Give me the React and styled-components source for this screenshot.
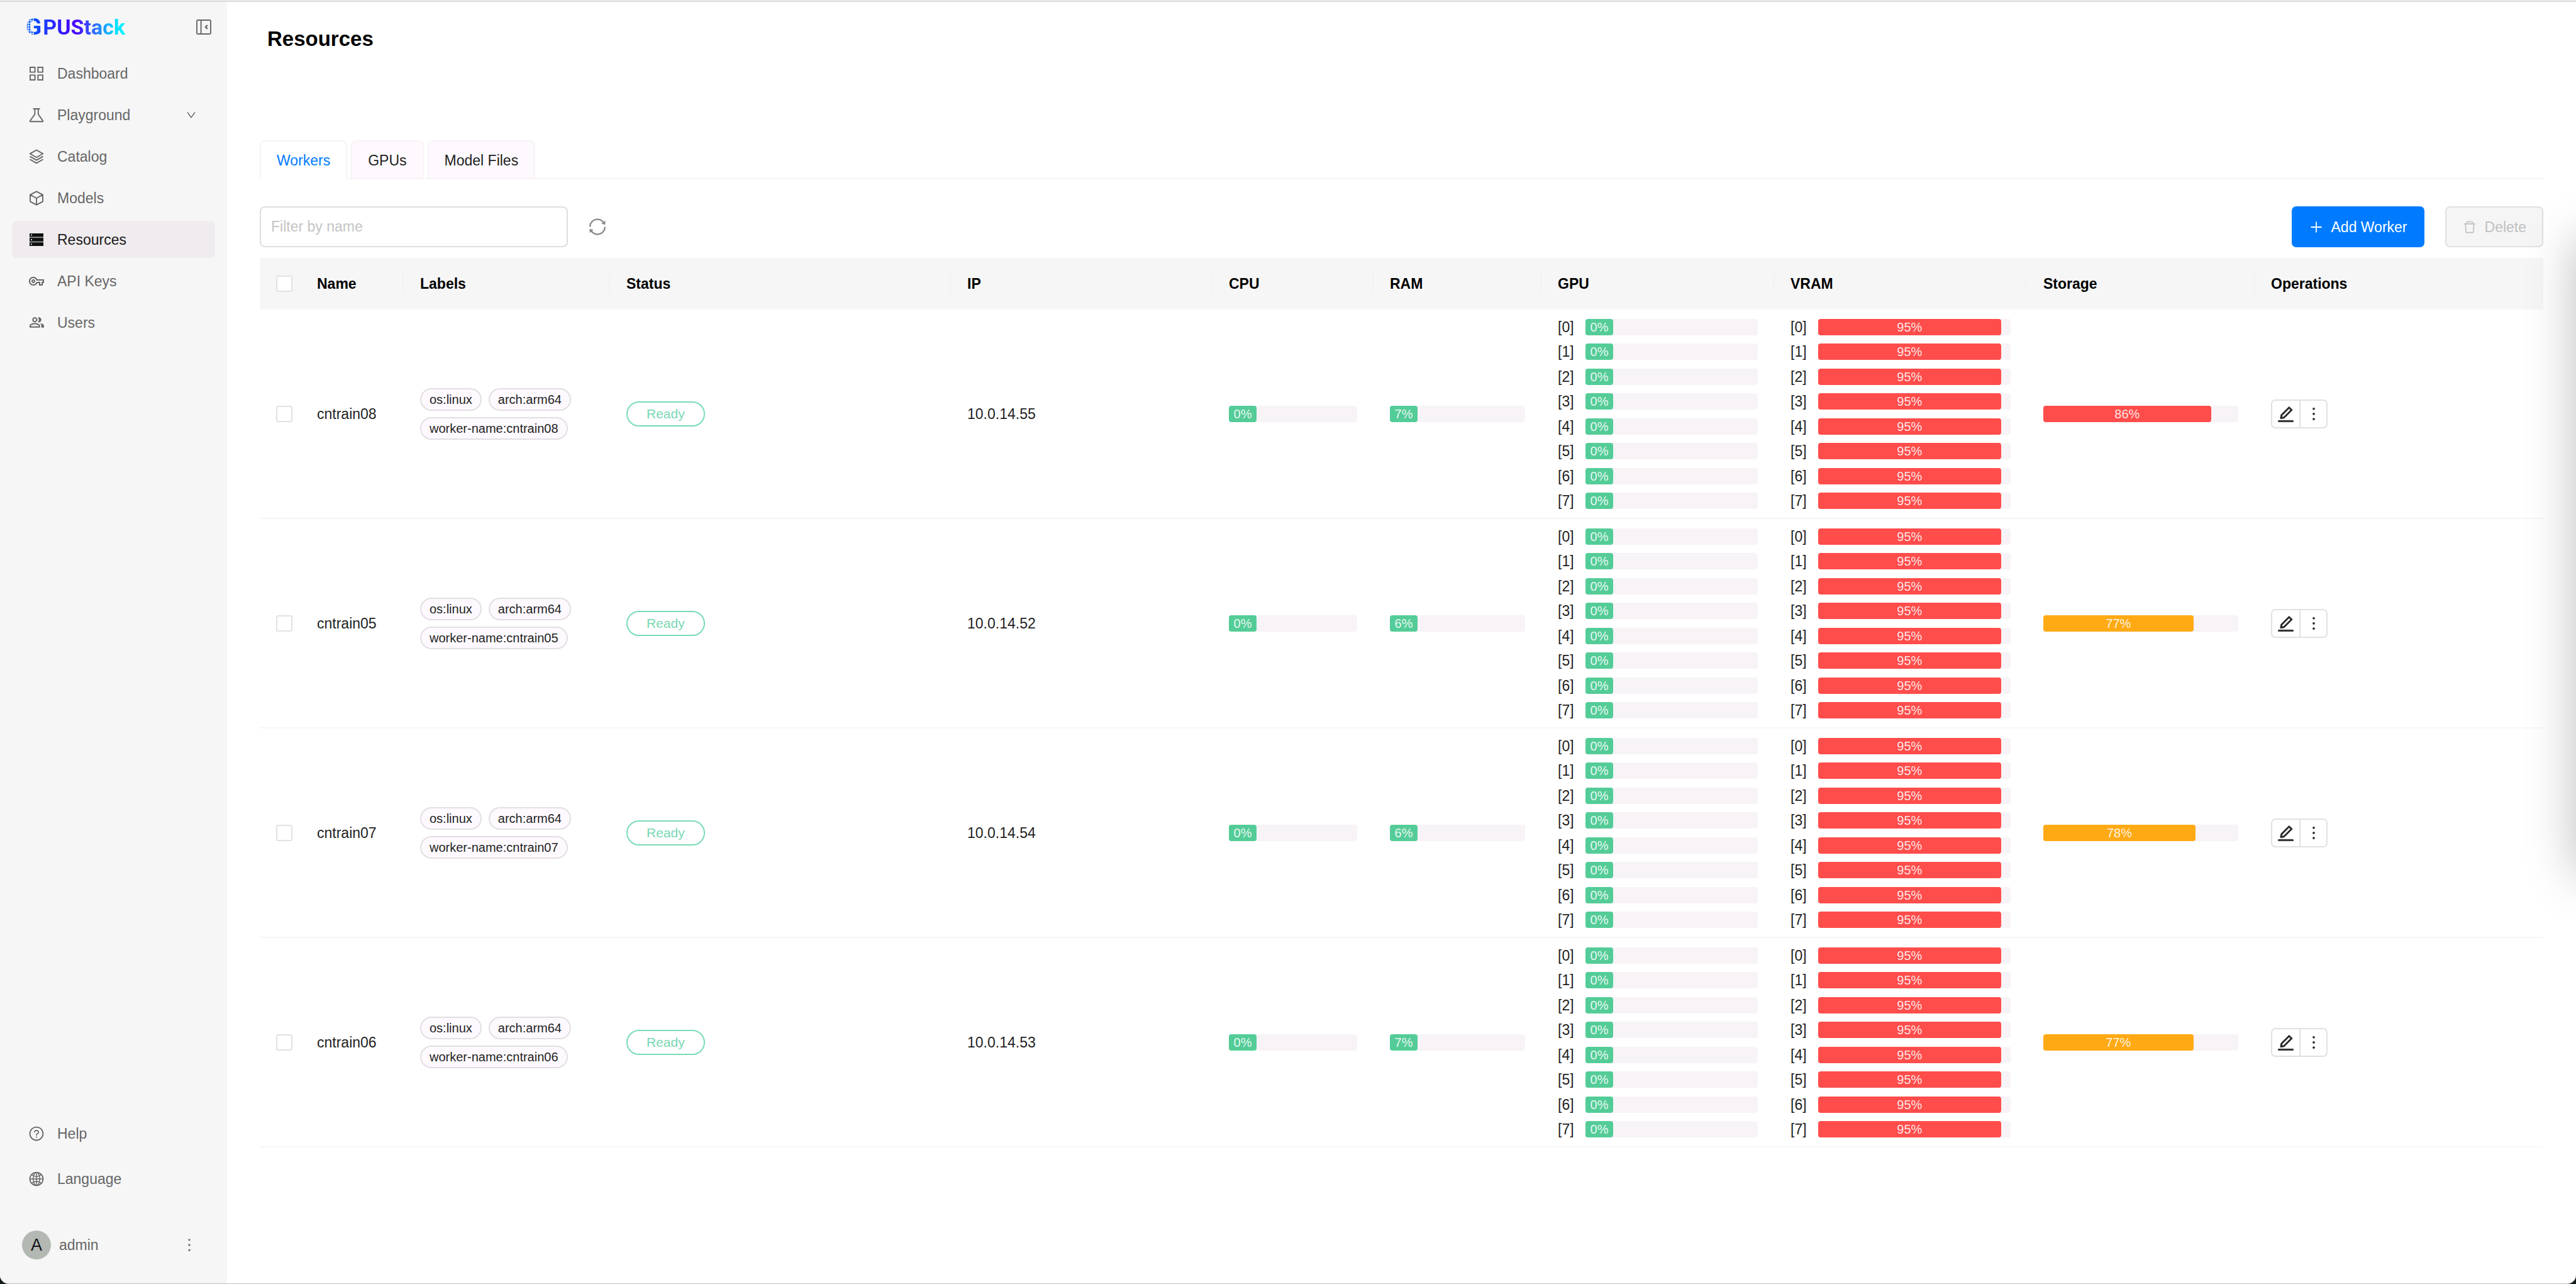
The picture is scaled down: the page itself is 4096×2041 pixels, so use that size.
import React from 'react';
import styled, { createGlobalStyle, css } from 'styled-components';
import {
  AiOutlineDelete,
  AiOutlineDown,
  AiOutlineEdit,
  AiOutlineGlobal,
  AiOutlineMore,
  AiOutlinePlus,
  AiOutlineQuestionCircle,
  AiOutlineSync,
} from 'react-icons/ai';
import { MdOutlinePeopleAlt, MdOutlineVpnKey } from 'react-icons/md';

const GlobalStyle = createGlobalStyle`
  *, *::before, *::after { box-sizing: border-box; }
  body {
    margin: 0;
    background: #141c16;
    color: #1f1f1f;
    font-family: "Liberation Sans", Arial, sans-serif;
    font-size: 23px;
    line-height: 36px;
  }
  button, input { font: inherit; color: inherit; }
  ul { list-style: none; margin: 0; padding: 0; }
`;

/* ---------- shell ---------- */

const Page = styled.div`
  display: flex;
  flex-direction: column;
  min-height: 100vh;
  overflow: hidden;
  background: #fff;
  border-bottom: 1px solid #bdbdbd;
  border-radius: 0 0 14px 14px;
`;

const TopEdge = styled.div`
  height: 3px;
  background: #f3f3f3;
  border-bottom: 2px solid #d9d9d9;
`;

const Body = styled.div`
  display: flex;
  flex: 1;
`;

const Sidebar = styled.aside`
  display: flex;
  flex-direction: column;
  flex: 0 0 361px;
  padding: 0 19px 32px;
  background: #f6f6f6;
`;

const Brand = styled.div`
  display: flex;
  align-items: center;
  justify-content: space-between;
  height: 80px;
  margin-bottom: 4px;
  padding: 0 2px 0 22px;
`;

const Logo = styled.a`
  position: relative;
  font-family: Roboto, sans-serif;
  font-weight: 700;
  font-size: 34px;
  line-height: 40px;
  text-decoration: none;
  color: transparent;
  background: linear-gradient(90deg, #0060ff 0%, #2a2bff 28%, #4a00ff 50%, #2f70ff 70%, #00e4ff 92%, #00f6ff 100%);
  background-clip: text;
  -webkit-background-clip: text;

  &::after {
    content: "";
    position: absolute;
    left: 0;
    top: 6px;
    width: 13px;
    height: 30px;
    background: radial-gradient(circle, transparent 1px, rgba(246, 246, 246, 0.85) 2px) 0 0 / 4px 4px;
  }
`;

const LogoInitial = styled.span`
  margin-right: 2px;
  font-size: 37px;
`;

const IconButton = styled.button`
  display: flex;
  align-items: center;
  justify-content: center;
  width: 32px;
  height: 32px;
  padding: 0;
  border: 0;
  background: none;
  color: ${(p) => p.$color || '#666'};
`;

const NavList = styled.ul`
  display: flex;
  flex-direction: column;
  gap: ${(p) => p.$gap}px;
`;

const NavLink = styled.a`
  display: flex;
  align-items: center;
  gap: 21px;
  height: 59px;
  padding: 0 29px 0 27px;
  border-radius: 8px;
  text-decoration: none;
  color: ${(p) => (p.$active ? '#1a1a1a' : '#666')};
  background: ${(p) => (p.$active ? '#efebee' : 'transparent')};
`;

const NavIcon = styled.span`
  display: flex;
  flex: 0 0 24px;
  min-width: 0;
  justify-content: center;
  svg { flex-shrink: 0; }
`;

const NavText = styled.span`
  flex: 1;
`;

const Foot = styled.div`
  margin-top: auto;
`;

const UserRow = styled.div`
  display: flex;
  align-items: center;
  height: 59px;
  margin-top: 46px;
  padding: 0 25px 0 16px;
  color: #666;
`;

const Avatar = styled.span`
  display: grid;
  place-items: center;
  width: 46px;
  height: 46px;
  margin-right: 13px;
  border-radius: 50%;
  background: #b3b8b3;
  color: #141414;
  font-size: 27px;
`;

const Main = styled.main`
  flex: 1;
  min-width: 0;
  padding: 0 52px;
`;

const Title = styled.h1`
  margin: 0 0 102px;
  padding-left: 12px;
  font-size: 33px;
  line-height: 118px;
  color: #000;
`;

/* ---------- tabs and toolbar ---------- */

const TabBar = styled.div`
  display: flex;
  gap: 6px;
  height: 62px;
  margin-bottom: 43px;
  box-shadow: inset 0 -2px 0 #f7f3f6;
`;

const Tab = styled.button`
  padding: 2px 25px 0;
  border: 2px solid #f7f3f6;
  border-bottom-color: ${(p) => (p.$active ? '#fff' : '#f7f3f6')};
  border-radius: 8px 8px 0 0;
  background: ${(p) => (p.$active ? '#fff' : '#fdf9fe')};
  color: ${(p) => (p.$active ? '#007bff' : '#1f1f1f')};
`;

const Toolbar = styled.div`
  display: flex;
  align-items: center;
  height: 65px;
  margin-bottom: 17px;
`;

const Search = styled.input`
  width: 490px;
  height: 65px;
  margin-right: 31px;
  padding: 0 16px;
  border: 2px solid #e1dee1;
  border-radius: 8px;
  background: #fff;
  &::placeholder { color: #c4c4c4; opacity: 1; }
`;

const Actions = styled.div`
  display: flex;
  gap: 33px;
  margin-left: auto;
`;

const Button = styled.button`
  display: flex;
  align-items: center;
  height: 65px;
  gap: 12px;
  padding: 0 25px;
  border: 2px solid #007bff;
  border-radius: 7px;
  background: #007bff;
  color: #fff;
  &:disabled {
    border-color: #e1dfe1;
    background: #f5f5f5;
    color: #c0c0c0;
  }
`;

/* ---------- table ---------- */

const Table = styled.table`
  width: 100%;
  table-layout: fixed;
  border-collapse: separate;
  border-spacing: 0;
`;

const HeadCell = styled.th`
  height: 82px;
  padding: 0 26px;
  text-align: left;
  color: #000;
  background: #f6f6f6;
  ${(p) =>
    p.$divided &&
    css`
      background: linear-gradient(#f4f2f4, #f4f2f4) right center / 2px 36px no-repeat #f6f6f6;
    `}
`;

const Cell = styled.td`
  padding: 15px 26px 14px;
  border-bottom: 2px solid #f9f5f7;
`;

const CheckBox = styled.input.attrs({ type: 'checkbox' })`
  display: block;
  appearance: none;
  width: 26px;
  height: 26px;
  margin: 0;
  border: 2px solid #e4e1e4;
  border-radius: 3px;
  background: #fff;
`;

const Tags = styled.ul`
  display: flex;
  flex-wrap: wrap;
  gap: 10px 11px;
`;

const Tag = styled.li`
  padding: 0 13px;
  border: 2px solid #e2dfe2;
  border-radius: 18px;
  background: #fdf9fe;
  font-size: 20px;
  line-height: 32px;
`;

const Status = styled.span`
  display: inline-block;
  padding: 0 30px;
  border: 2px solid #78dcb4;
  border-radius: 20px;
  color: #78d8b2;
  font-size: 21px;
  line-height: 36px;
  vertical-align: middle;
`;

const tones = { low: '#54cc98', mid: '#ffaa15', high: '#ff4d4b' };
const toneOf = (v) => (v > 80 ? 'high' : v > 50 ? 'mid' : 'low');

const Track = styled.div`
  flex: 1;
  height: 26px;
  border-radius: 4px;
  background: #f7f3f7;
`;

const Fill = styled.div`
  min-width: 44px;
  height: 26px;
  border-radius: 4px;
  background: ${(p) => tones[p.$tone]};
  color: rgba(255, 255, 255, 0.88);
  font-size: 20px;
  line-height: 26px;
  text-align: center;
`;

const DeviceList = styled.ul`
  display: flex;
  flex-direction: column;
  justify-content: space-between;
  height: 302px;
`;

const Device = styled.li`
  display: flex;
  align-items: center;
  height: 26px;
`;

const DeviceIndex = styled.span`
  width: 44px;
  line-height: 26px;
`;

const ButtonGroup = styled.div`
  display: inline-flex;
  height: 46px;
  border: 2px solid #e3e0e3;
  border-radius: 7px;
  vertical-align: middle;
`;

const GroupButton = styled.button`
  display: flex;
  align-items: center;
  justify-content: center;
  width: 43px;
  padding: 0;
  border: 0;
  background: none;
  color: #262626;
  & + & {
    border-left: 2px solid #e3e0e3;
  }
`;

const SideShadow = styled.div`
  position: fixed;
  left: 100%;
  top: 379px;
  width: 200px;
  height: 1011px;
  box-shadow: 0 0 80px rgba(0, 0, 0, 0.26);
  pointer-events: none;
`;

/* ---------- icons ---------- */

const LineIcon = ({ children }) => (
  <svg width="24" height="24" viewBox="0 0 24 24" fill="none" stroke="currentColor" strokeWidth="1.9" strokeLinejoin="round" aria-hidden="true">
    {children}
  </svg>
);

const DashboardIcon = () => (
  <LineIcon>
    <path strokeLinejoin="miter" d="M2 2h7.6v7.6H2zM14.4 2H22v7.6h-7.6zM2 14.4h7.6V22H2zM14.4 14.4H22V22h-7.6z" />
  </LineIcon>
);
const FlaskIcon = () => (
  <LineIcon>
    <path d="M6.6 2h11M9.4 2v8.6L1.8 21c-.4.7 0 1.3.8 1.3h18.8c.8 0 1.2-.6.8-1.3L14.8 10.6V2" />
  </LineIcon>
);
const StackIcon = () => (
  <LineIcon>
    <path d="M12 1.5 22.3 7.3 12 13.2 1.7 7.3zM1.5 11.6 12 17.6l10.5-6M1.5 16.3 12 22.4l10.5-6.1" />
  </LineIcon>
);
const CubeIcon = () => (
  <LineIcon>
    <path d="M12 1.4 22 6.7v10.6L12 22.6 2 17.3V6.7zM2 6.7l10 5.3 10-5.3M12 12v10.6" />
  </LineIcon>
);
const ServerIcon = () => (
  <svg width="24" height="24" viewBox="0 0 24 24" aria-hidden="true">
    <rect x="1" y="2" width="22" height="20" fill="#8d8b8d" />
    <path fill="#0c0f0d" d="M1 2h22v5.3H1zM1 9.3h22v5.3H1zM1 16.6h22V22H1z" />
    <path fill="#d5d2d5" d="M3 3.6h2v2H3zM3 11h2v2H3zM3 18.3h2v2H3z" />
  </svg>
);
const CollapseIcon = () => (
  <svg width="26" height="26" viewBox="0 0 26 26" fill="none" stroke="currentColor" strokeWidth="1.9" aria-hidden="true">
    <rect x="2" y="2" width="22" height="22" rx="1.5" />
    <path d="M8.6 2v22" />
    <path strokeWidth="2.4" d="M18.8 10 16 13l2.8 3" />
  </svg>
);

/* ---------- data ---------- */

const navItems = [
  { label: 'Dashboard', icon: <DashboardIcon /> },
  { label: 'Playground', icon: <FlaskIcon />, expandable: true },
  { label: 'Catalog', icon: <StackIcon /> },
  { label: 'Models', icon: <CubeIcon /> },
  { label: 'Resources', icon: <ServerIcon />, active: true },
  { label: 'API Keys', icon: <MdOutlineVpnKey size={24} /> },
  { label: 'Users', icon: <MdOutlinePeopleAlt size={25} /> },
];

const footItems = [
  { label: 'Help', icon: <AiOutlineQuestionCircle size={26} /> },
  { label: 'Language', icon: <AiOutlineGlobal size={26} /> },
];

const columns = [
  { key: 'select', width: 65 },
  { key: 'name', title: 'Name', width: 164 },
  { key: 'labels', title: 'Labels', width: 328 },
  { key: 'status', title: 'Status', width: 542 },
  { key: 'ip', title: 'IP', width: 416 },
  { key: 'cpu', title: 'CPU', width: 256 },
  { key: 'ram', title: 'RAM', width: 267 },
  { key: 'gpu', title: 'GPU', width: 370 },
  { key: 'vram', title: 'VRAM', width: 402 },
  { key: 'storage', title: 'Storage', width: 362 },
  { key: 'operations', title: 'Operations' },
];

const workers = [
  { name: 'cntrain08', ip: '10.0.14.55', cpu: 0, ram: 7, storage: 86 },
  { name: 'cntrain05', ip: '10.0.14.52', cpu: 0, ram: 6, storage: 77 },
  { name: 'cntrain07', ip: '10.0.14.54', cpu: 0, ram: 6, storage: 78 },
  { name: 'cntrain06', ip: '10.0.14.53', cpu: 0, ram: 7, storage: 77 },
];

const gpuLoad = Array(8).fill(0);
const vramLoad = Array(8).fill(95);

/* ---------- parts ---------- */

const Nav = ({ items, gap }) => (
  <NavList $gap={gap}>
    {items.map((item) => (
      <li key={item.label}>
        <NavLink href="#" $active={item.active}>
          <NavIcon>{item.icon}</NavIcon>
          <NavText>{item.label}</NavText>
          {item.expandable && <AiOutlineDown size={18} />}
        </NavLink>
      </li>
    ))}
  </NavList>
);

const Bar = ({ value }) => (
  <Track>
    <Fill $tone={toneOf(value)} style={{ width: `${value}%` }}>
      {value}%
    </Fill>
  </Track>
);

const Devices = ({ values }) => (
  <DeviceList>
    {values.map((value, i) => (
      <Device key={i}>
        <DeviceIndex>[{i}]</DeviceIndex>
        <Bar value={value} />
      </Device>
    ))}
  </DeviceList>
);

const WorkerRow = ({ worker }) => (
  <tr>
    <Cell>
      <CheckBox aria-label={`Select ${worker.name}`} />
    </Cell>
    <Cell>{worker.name}</Cell>
    <Cell>
      <Tags>
        <Tag>os:linux</Tag>
        <Tag>arch:arm64</Tag>
        <Tag>worker-name:{worker.name}</Tag>
      </Tags>
    </Cell>
    <Cell>
      <Status>Ready</Status>
    </Cell>
    <Cell>{worker.ip}</Cell>
    <Cell><Bar value={worker.cpu} /></Cell>
    <Cell><Bar value={worker.ram} /></Cell>
    <Cell><Devices values={gpuLoad} /></Cell>
    <Cell><Devices values={vramLoad} /></Cell>
    <Cell><Bar value={worker.storage} /></Cell>
    <Cell>
      <ButtonGroup>
        <GroupButton aria-label="Edit"><AiOutlineEdit size={31} strokeWidth={24} /></GroupButton>
        <GroupButton aria-label="More"><AiOutlineMore size={30} strokeWidth={16} /></GroupButton>
      </ButtonGroup>
    </Cell>
  </tr>
);

export default function App() {
  return (
    <>
      <GlobalStyle />
      <Page>
        <TopEdge />
        <Body>
          <Sidebar>
            <Brand>
              <Logo href="#"><LogoInitial>G</LogoInitial>PUStack</Logo>
              <IconButton aria-label="Collapse sidebar"><CollapseIcon /></IconButton>
            </Brand>
            <nav><Nav items={navItems} gap={7} /></nav>
            <Foot>
              <Nav items={footItems} gap={13} />
              <UserRow>
                <Avatar>A</Avatar>
                <NavText>admin</NavText>
                <IconButton aria-label="Account menu"><AiOutlineMore size={30} /></IconButton>
              </UserRow>
            </Foot>
          </Sidebar>
          <Main>
            <Title>Resources</Title>
            <TabBar role="tablist">
              <Tab role="tab" aria-selected="true" $active>Workers</Tab>
              <Tab role="tab" aria-selected="false">GPUs</Tab>
              <Tab role="tab" aria-selected="false">Model Files</Tab>
            </TabBar>
            <Toolbar>
              <Search type="text" placeholder="Filter by name" aria-label="Filter by name" />
              <IconButton aria-label="Refresh" $color="#8a8a8a"><AiOutlineSync size={33} /></IconButton>
              <Actions>
                <Button><AiOutlinePlus size={24} />Add Worker</Button>
                <Button disabled><AiOutlineDelete size={24} />Delete</Button>
              </Actions>
            </Toolbar>
            <Table>
              <colgroup>
                {columns.map((c) => (
                  <col key={c.key} width={c.width} />
                ))}
              </colgroup>
              <thead>
                <tr>
                  {columns.map((c, i) => (
                    <HeadCell key={c.key} scope="col" $divided={i > 0 && i < columns.length - 1}>
                      {c.title || <CheckBox aria-label="Select all" />}
                    </HeadCell>
                  ))}
                </tr>
              </thead>
              <tbody>
                {workers.map((w) => (
                  <WorkerRow key={w.name} worker={w} />
                ))}
              </tbody>
            </Table>
          </Main>
        </Body>
        <SideShadow />
      </Page>
    </>
  );
}
